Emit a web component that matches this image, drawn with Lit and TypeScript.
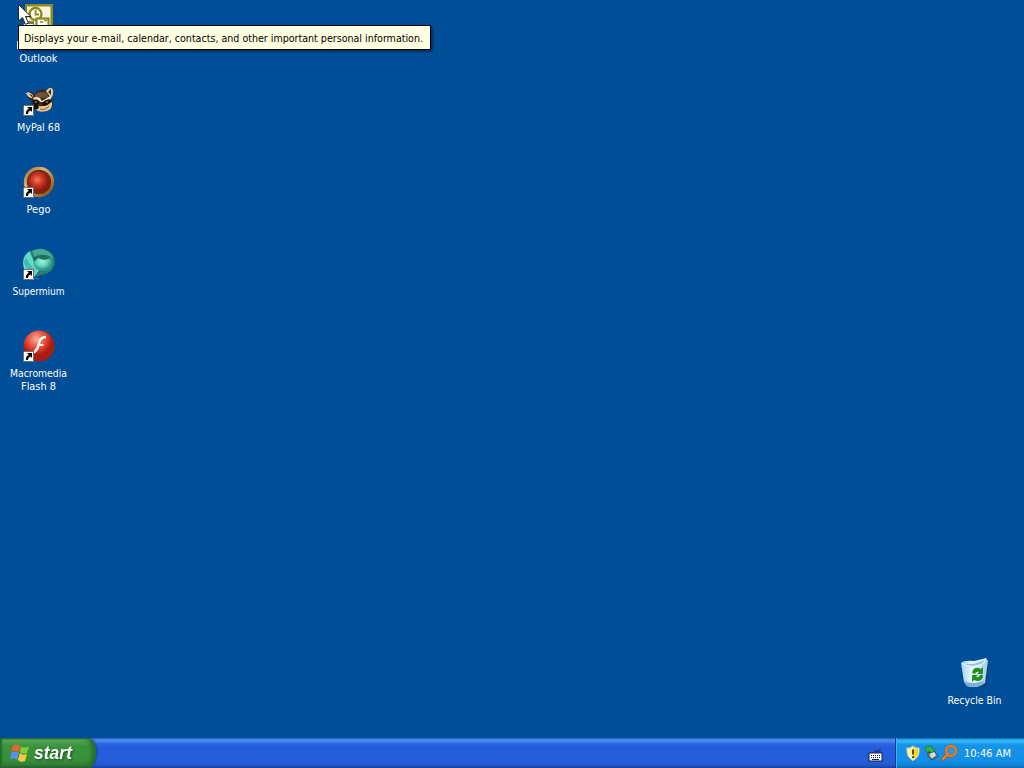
import { LitElement, html, css, svg } from 'lit';
import { customElement, property } from 'lit/decorators.js';

const shortcuts = [
    { icon: 'outlook', lines: [['', 43], ['Outlook', 38]] },
    { icon: 'mypal', lines: [['MyPal 68', 43]] },
    { icon: 'pego', lines: [['Pego', 24]] },
    { icon: 'supermium', lines: [['Supermium', 52]] },
    { icon: 'flash', lines: [['Macromedia', 57], ['Flash 8', 35]] },
];

const arrow = svg`
    <rect x="0" y="20" width="11" height="11" fill="#fff" />
    <rect x="0.5" y="20.5" width="10" height="10" fill="none" stroke="#333" stroke-width="0.7" />
    <path d="M4 22H9V27L7.5 25.6Q5.2 26.5 4.8 29H3Q2.4 25.6 5.8 23.8Z" fill="#000" />
`;

const icons: Record<string, unknown> = {
    outlook: svg`
        <rect x="2" y="1" width="28" height="28" fill="#8b8920" />
        <rect x="4" y="3.5" width="23.5" height="23" fill="#f7f6dc" />
        <circle cx="12.5" cy="11" r="6" fill="#fffef0" stroke="#8b8920" stroke-width="2.4" />
        <path d="M12.5 7V11.5H16" fill="none" stroke="#8b8920" stroke-width="1.8" />
        <rect x="13.5" y="15.5" width="12" height="9" fill="#fff" stroke="#8b8920" stroke-width="2.2" />
        <path d="M17 19H20M21 17.5H24" stroke="#8b8920" stroke-width="1.5" />
        <path d="M4 19H11M6 22H11" stroke="#8b8920" stroke-width="2" />
    `,
    mypal: svg`
        <path d="M4 8Q7 6 11 9Q16 3 23 5L28 2Q32 6 29 13Q31 21 27 25Q21 28 14 26L9 21L8 15Q4 14 4 8Z" fill="#3b2a20" />
        <path d="M3 8Q6 6 10 10L9 13Q5 13 3 8ZM23 6Q28 0 30 5Q31 10 28 13Z" fill="#e6c99e" />
        <path d="M6 9L9 10L9 12ZM25 7L28 4L28 10Z" fill="#3e2c23" />
        <path d="M12 10Q16 5 24 8L25 12L19 13Q15 11 10 13Z" fill="#71503b" />
        <path d="M10 13Q14 11 17 13L19 16L27 11Q29 12 28 14Q23 14 21 17L17 17Q14 13 11 15Z" fill="#f3dfb9" />
        <path d="M14 20Q18 23 25 19L29 17Q30 24 24 26Q17 28 13 25Z" fill="#e6c597" />
        <path d="M9 16Q13 13 17 17L13 22ZM19 18Q23 13 28 16Q26 21 20 21Z" fill="#18130f" />
        <circle cx="13" cy="17" r=".8" fill="#d1c7b0" />
        <circle cx="24" cy="17" r=".8" fill="#d1c7b0" />
        <ellipse cx="13" cy="22" rx="2.8" ry="2.3" fill="#17110e" />
        <path d="M17 24Q22 26 26 21" fill="none" stroke="#896041" />
    `,
    pego: svg`
        <defs><radialGradient id="ruby" cx="42%" cy="40%"><stop stop-color="#f4775b" /><stop offset=".5" stop-color="#cc3826" /><stop offset="1" stop-color="#8b1b0e" /></radialGradient>
        <linearGradient id="ring" x2="1" y2="1"><stop stop-color="#8d622c" /><stop offset=".35" stop-color="#ddb578" /><stop offset=".7" stop-color="#b47432" /><stop offset="1" stop-color="#684116" /></linearGradient></defs>
        <circle cx="16" cy="15" r="15.2" fill="url(#ring)" />
        <circle cx="16" cy="15" r="12.2" fill="#6b2c13" />
        <circle cx="16" cy="15" r="10.8" fill="url(#ruby)" />
    `,
    supermium: svg`
        <defs><radialGradient id="aqua" cx="45%" cy="40%"><stop stop-color="#9bf5d8" /><stop offset=".6" stop-color="#61d4b8" /><stop offset="1" stop-color="#2f9b8b" /></radialGradient></defs>
        <path d="M1 17Q0 7 8 2Q18-3 26 2Q34 8 31 17Q28 25 18 26L10 28Z" fill="#287e74" />
        <path d="M9 2Q20-3 28 5Q30 8 30 10Q22 4 12 8Z" fill="#45a991" />
        <path d="M7 2Q8 9 17 20L11 28Q0 24 0 14Q0 6 7 2Z" fill="#64d9c8" />
        <path d="M3 8Q6 15 13 22L10 24Q2 20 1 13Z" fill="#44bbb1" />
        <ellipse cx="20" cy="14" rx="9.5" ry="8" fill="url(#aqua)" />
        <path d="M10 9Q18 3 28 8Q23 13 15 9L11 13Z" fill="#246c61" />
        <path d="M10 29L16 30" stroke="#2a769f" />
    `,
    flash: svg`
        <defs><radialGradient id="flash-red" cx="42%" cy="28%"><stop stop-color="#ffb0a0" /><stop offset=".4" stop-color="#ee6957" /><stop offset=".75" stop-color="#db3524" /><stop offset="1" stop-color="#aa1d12" /></radialGradient></defs>
        <circle cx="16" cy="15" r="15.5" fill="url(#flash-red)" />
        <path d="M23 6Q17 6 15.8 13Q14 21 9 22" fill="none" stroke="#fff3ed" stroke-width="2.6" />
        <path d="M14 14H20.5" fill="none" stroke="#fff3ed" stroke-width="2" />
    `,
    recycle: svg`
        <defs><linearGradient id="glass"><stop stop-color="#9dd3f6" /><stop offset=".45" stop-color="#f0fbff" /><stop offset="1" stop-color="#9dc9ea" /></linearGradient></defs>
        <path d="M26 8L30 5L26 28L20 30Z" fill="#162e48" opacity=".45" />
        <path d="M2 5Q5 2 15 3L27 0L29 3L26 25Q18 31 8 28L5 24Z" fill="url(#glass)" />
        <path d="M2 5Q12 5 17 5L27 0Q29 4 20 8Q11 12 2 5Z" fill="#e4f5ff" />
        <path d="M4 5Q12 7 18 5L26 2Q24 6 18 7Q9 9 4 5Z" fill="#91c1e3" />
        <path d="M5 23Q13 27 25 23L24 26Q16 31 8 28Z" fill="#79afd9" />
        <path d="M13 15Q14 9 20 10L22 11L24 9V16H18L20 14Q17 13 16 16Z" fill="#239019" />
        <path d="M24 17Q24 23 18 23L15 22L13 24V17H19L17 19Q20 20 21 17Z" fill="#239019" />
    `,
};

@customElement('desktop-shortcut')
export class DesktopShortcut extends LitElement {
    static styles = css`
        :host {
            display: flex;
            flex-direction: column;
            align-items: center;
            width: 75px;
            height: 82px;
            font: 11px/13px "DejaVu Sans Condensed", "DejaVu Sans", sans-serif;
            font-stretch: condensed;
        }
        .icon {
            display: block;
            width: 32px;
            height: 32px;
            margin-bottom: 3px;
            overflow: visible;
        }
        .label {
            width: 75px;
            height: 13px;
            overflow: visible;
            fill: #fff;
        }
    `;

    @property() icon = '';
    @property({ type: Array }) lines: (string | number)[][] = [];
    @property({ type: Boolean }) linked = false;

    render() {
        return html`
            <svg class="icon" viewBox="0 0 32 32">${icons[this.icon]}${this.linked ? arrow : ''}</svg>
            ${this.lines.map(([text, width]) => html`
                <svg class="label">
                    ${text
                        ? svg`<text x="37.5" y="11" text-anchor="middle" textLength=${width} lengthAdjust="spacingAndGlyphs">${text}</text>`
                        : svg`<path d="M16.5 3V11" stroke="#fff" />`}
                </svg>
            `)}
        `;
    }
}

@customElement('task-bar')
export class TaskBar extends LitElement {
    static styles = css`
        :host {
            display: flex;
            height: 30px;
            background: linear-gradient(#1f4fae 0, #3f83ee 1px, #4a8cf0 3px, #2865df 6px, #245ddb 10px, #255edc 23px, #2158cf 27px, #173f9c 30px);
        }
        .start {
            display: flex;
            align-items: center;
            box-sizing: border-box;
            width: 96px;
            padding-left: 10px;
            gap: 4px;
            border-radius: 0 8px 8px 0 / 0 14px 14px 0;
            background: linear-gradient(#276f35 0, #64ad65 2px, #4ba14b 4px, #3a943c 8px, #388f39 22px, #317f34 27px, #245c38 30px);
            box-shadow: inset -4px 0 4px #236d2b, inset 2px 0 2px #236d2b, 1px 0 2px #173f9c;
        }
        .flag {
            width: 20px;
            height: 20px;
        }
        .word {
            width: 42px;
            height: 22px;
            overflow: visible;
            fill: #fff;
            font: italic bold 18px "Liberation Sans", sans-serif;
            filter: drop-shadow(1px 1px 1px #174c20);
        }
        .tasks {
            display: flex;
            flex: 1;
            justify-content: flex-end;
            align-items: center;
            padding: 3px 12px 0 0;
        }
        .keyboard {
            width: 15px;
            height: 14px;
        }
        .tray {
            display: flex;
            align-items: center;
            box-sizing: border-box;
            width: 129px;
            padding-left: 9px;
            gap: 1px;
            border-left: 1px solid #103b91;
            background: linear-gradient(#1764a9 0, #24b2f3 2px, #35b8f5 3px, #1693e8 7px, #118ee9 23px, #1383d5 27px, #1169b2 30px);
            box-shadow: inset 1px 0 #35b8f5;
        }
        .status {
            width: 17px;
            height: 18px;
        }
        .clock {
            width: 48px;
            height: 15px;
            margin: 0 0 2px 5px;
            overflow: visible;
            fill: #fff;
            font: 11px "DejaVu Sans Condensed", "DejaVu Sans", sans-serif;
            font-stretch: condensed;
        }
    `;

    render() {
        return html`
            <div class="start">
                <svg class="flag" viewBox="0 0 20 20">
                    <path d="M3 3Q6 0 10 3L9 9Q5 6 1 9Z" fill="#f2622f" />
                    <path d="M11 3Q15 6 19 3L17 10Q13 12 10 9Z" fill="#85ca3c" />
                    <path d="M1 10Q5 7 9 10L7 17Q4 14 0 16Z" fill="#5b8ff0" />
                    <path d="M10 10Q13 13 17 11L15 18Q11 20 8 17Z" fill="#f9cb38" />
                </svg>
                <svg class="word"><text x="0" y="17" textLength="38" lengthAdjust="spacingAndGlyphs">start</text></svg>
            </div>
            <div class="tasks">
                <svg class="keyboard" viewBox="0 0 15 14">
                    <path d="M7 5V3H12V1" fill="none" stroke="#172a65" />
                    <rect x="1" y="5" width="13" height="8" fill="#fff" stroke="#15203d" />
                    <path d="M3 7.5H13M3 9.5H13" stroke="#15203d" stroke-dasharray="1 1" /><path d="M4 11.5H11" stroke="#15203d" />
                </svg>
            </div>
            <div class="tray">
                <svg class="status" viewBox="0 0 17 18">
                    <path d="M8 2Q11 5 14 4Q15 13 8 16.5Q1 13 2 4Q5 5 8 2Z" fill="#fff3a7" stroke="#d8d3a8" />
                    <path d="M8 3Q11 5.5 13.5 5Q14 12 8 15.5Z" fill="#f4d52c" /><path d="M8 5.5V10.5M8 12V14" stroke="#2b2a12" stroke-width="1.6" />
                </svg>
                <svg class="status" viewBox="0 0 17 18">
                    <path d="M5 9L11 7L15 12L9 16L5 12Z" fill="#87918c" stroke="#343e42" />
                    <path d="M8 9L11 8L13 11L9 14L7 12Z" fill="#d6e2e1" />
                    <path d="M2 3L9 2V5H13L9 9L6 7L4 9Z" fill="#34b343" stroke="#157432" stroke-width=".6" />
                </svg>
                <svg class="status" viewBox="0 0 17 18">
                    <path d="M7 10L2 15" stroke="#b35512" stroke-width="3.4" stroke-linecap="round" />
                    <circle cx="10" cy="7" r="5" fill="#279be3" stroke="#b35512" stroke-width="3" />
                    <circle cx="10" cy="7" r="5" fill="none" stroke="#ed8127" stroke-width="2" />
                    <path d="M7 10L2 15" stroke="#ed8127" stroke-width="2" stroke-linecap="round" />
                </svg>
                <svg class="clock"><text x="0" y="12" textLength="47" lengthAdjust="spacingAndGlyphs">10:46 AM</text></svg>
            </div>
        `;
    }
}

@customElement('app-root')
export class AppRoot extends LitElement {
    static styles = css`
        :host {
            display: flex;
            flex-direction: column;
            position: relative;
            width: 1024px;
            height: 768px;
            overflow: hidden;
            background: #004e98;
        }
        .desktop {
            display: flex;
            flex: 1;
            justify-content: space-between;
            padding: 3px 12px 0 1px;
        }
        .bin {
            align-self: flex-end;
            height: 80px;
        }
        .tooltip {
            position: absolute;
            left: 18px;
            top: 25px;
            box-sizing: border-box;
            width: 413px;
            height: 25px;
            padding: 4px 5px;
            border: 1px solid #000;
            background: #ffffe1;
            box-shadow: 2px 2px 2px #0006;
        }
        .hint {
            display: block;
            width: 401px;
            height: 15px;
            overflow: visible;
            font: 11px "DejaVu Sans Condensed", "DejaVu Sans", sans-serif;
            font-stretch: condensed;
        }
        .cursor {
            position: absolute;
            left: 18px;
            top: 4px;
            width: 14px;
            height: 21px;
        }
    `;

    render() {
        return html`
            <div class="desktop">
                <div>
                    ${shortcuts.map((item) => html`<desktop-shortcut .icon=${item.icon} .lines=${item.lines} linked></desktop-shortcut>`)}
                </div>
                <desktop-shortcut class="bin" icon="recycle" .lines=${[['Recycle Bin', 54]]}></desktop-shortcut>
            </div>
            <task-bar></task-bar>
            <div class="tooltip">
                <svg class="hint"><text x="0" y="12" textLength="399" lengthAdjust="spacingAndGlyphs">Displays your e-mail, calendar, contacts, and other important personal information.</text></svg>
            </div>
            <svg class="cursor" viewBox="0 0 14 21"><path d="M.5.5V17L4.5 13.5L7.5 20.5L10.5 19L7.5 12.5H13Z" fill="#fff" stroke="#223" /></svg>
        `;
    }
}
